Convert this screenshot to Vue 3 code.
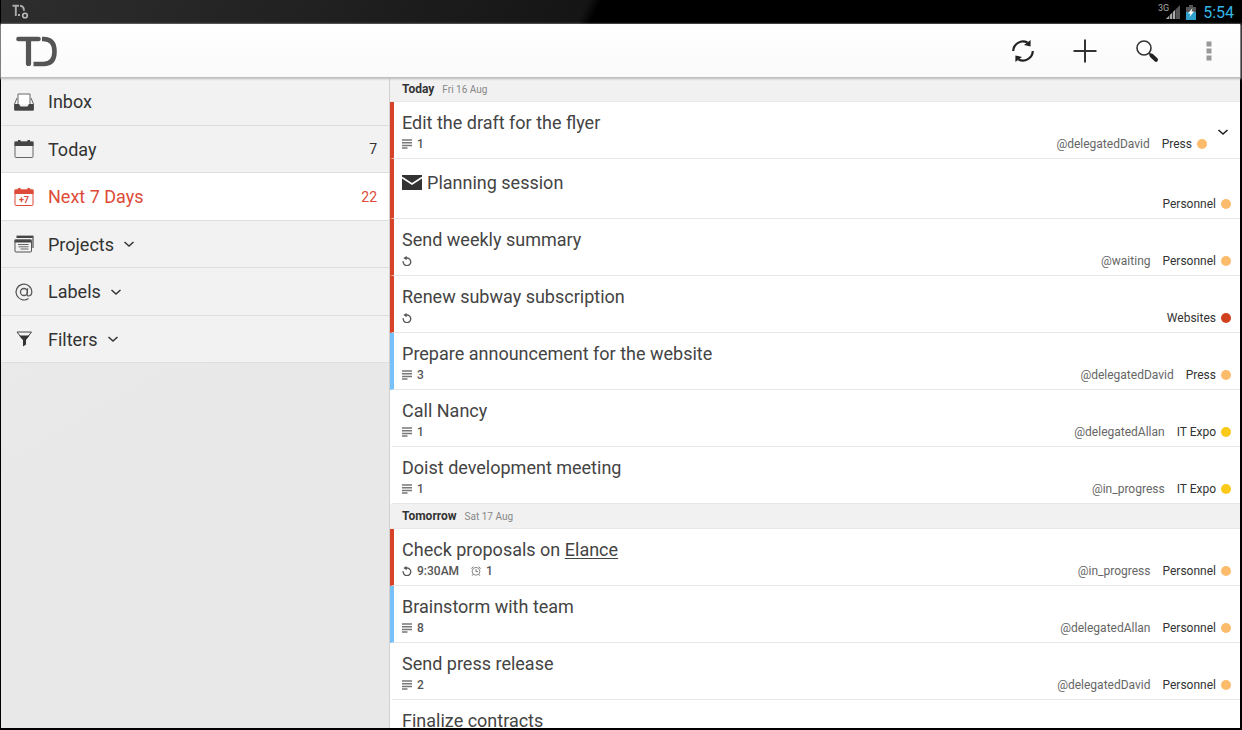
<template>
  <div class="device">
    <div class="status-bar">
      <svg class="status-app" width="18" height="16" viewBox="0 0 18 16">
        <path d="M1.500 1.800h6.500M4.800 2v10M9 1.800q4 .4 4 5M7 11h2" fill="none" stroke="#aaa" stroke-width="1.900" />
        <circle cx="14" cy="11.500" r="2.300" fill="none" stroke="#bbb" stroke-width="1.600" />
      </svg>
      <div class="status-right">
        <span class="network">3G</span>
        <svg class="signal" width="14" height="14" viewBox="0 0 14 14">
          <path d="M0 14 14 0v14z" fill="#555" />
          <path d="M0 14 10 4v10z" fill="#aaa" />
          <path d="M3.500 0v14M6.500 0v14M9.500 0v14" stroke="#000" stroke-width="0.700" />
        </svg>
        <svg class="battery" width="10" height="15" viewBox="0 0 10 15">
          <path d="M3 0h4v2h3v5H0V2h3z" fill="#555" />
          <path d="M0 7h10v8H0z" fill="#2fa0cc" />
          <path d="M6.500 3 2 8.500h2.500L3.500 12 8 6.500H5.500z" fill="#fff" />
        </svg>
        <time class="clock">5:54</time>
      </div>
    </div>

    <header class="action-bar">
      <svg class="logo" width="42" height="32" viewBox="0 0 42 32" role="img" aria-label="Todoist">
        <g fill="none" stroke="#555" stroke-linecap="round">
          <path d="M3.500 4H23.500" stroke-width="4.600" />
          <path d="M13.500 5v23.500" stroke-width="5.200" />
        </g>
        <path d="M27 4h1.500q11 0 11 12.500T28.500 29H18.500" fill="none" stroke="#555" stroke-width="4.600" />
      </svg>
      <div class="actions">
        <button type="button" aria-label="Sync">
          <svg width="24" height="24" viewBox="0 0 24 24">
            <path d="M2.200 12A9.800 9.800 0 0 1 16.500 3.600M21.800 12A9.800 9.800 0 0 1 7.500 20.400" fill="none" stroke="#222" stroke-width="2.200" />
            <path d="M19.600 1v6.600L13 6z M4.400 23v-6.600L11 18z" fill="#222" />
          </svg>
        </button>
        <button type="button" aria-label="Add task">
          <svg width="24" height="24" viewBox="0 0 24 24">
            <path d="M12 .5v23M.5 12h23" stroke="#333" stroke-width="2" />
          </svg>
        </button>
        <button type="button" aria-label="Search">
          <svg width="24" height="24" viewBox="0 0 24 24">
            <circle cx="9" cy="9" r="7" fill="none" stroke="#333" stroke-width="1.600" />
            <path d="m14 14 3 3" stroke="#333" stroke-width="2" />
            <path d="m16.500 16.500 4.500 4.300" stroke="#222" stroke-width="4" stroke-linecap="round" />
          </svg>
        </button>
        <button type="button" aria-label="More options">
          <svg width="24" height="24" viewBox="0 0 24 24">
            <path d="M9.500 2.500h5v5h-5zM9.500 9.500h5v5h-5zM9.500 16.500h5v5h-5z" fill="#999" />
          </svg>
        </button>
      </div>
    </header>

    <div class="content">
      <nav class="sidebar">
        <ul>
          <li v-for="item in menu" :key="item.name" :class="{ active: item.name === selected }">
            <button type="button" @click="selected = item.name">
              <svg v-if="item.icon === 'inbox'" class="menu-icon" viewBox="0 0 20 20">
                <path d="M4 12V2h12v10" fill="#fff" stroke="#666" />
                <path d="M3 6 .5 12v6h19v-6L17 6" fill="none" stroke="#666" />
                <path d="M.5 12H5l1.500 2.500h7L15 12h4.500v6.500H.5z" fill="#444" />
              </svg>
              <svg v-else-if="item.icon === 'calendar'" class="menu-icon" viewBox="0 0 20 20">
                <rect x="1" y="3" width="18" height="15.500" rx="1" fill="none" stroke="#666" />
                <path d="M.5 2.500h19V7H.5zM4 1h2.500v2H4zM13.500 1H16v2h-2.500z" fill="#444" />
              </svg>
              <svg v-else-if="item.icon === 'week'" class="menu-icon" viewBox="0 0 20 20">
                <rect x="1" y="3" width="18" height="15.500" rx="1" fill="none" stroke="currentColor" />
                <path d="M.5 2.500h19V7H.5zM4 1h2.500v2H4zM13.500 1H16v2h-2.500z" fill="currentColor" />
                <text x="10" y="16" text-anchor="middle" font-size="9" font-weight="700" fill="currentColor">+7</text>
              </svg>
              <svg v-else-if="item.icon === 'projects'" class="menu-icon" viewBox="0 0 20 20">
                <path d="M2.500 2.800h17" fill="none" stroke="#444" stroke-width="2.400" />
                <path d="M19 3v11" fill="none" stroke="#777" stroke-width="1.600" />
                <path d="M.5 5.500h17v3H.5z" fill="#444" />
                <rect x="1" y="6" width="16.500" height="12" rx="1" fill="none" stroke="#555" />
                <path d="M4 10.500h10.500M4.500 12.800h10M6.500 15h8" stroke="#666" />
              </svg>
              <svg v-else-if="item.icon === 'labels'" class="menu-icon" viewBox="0 0 20 20">
                <circle cx="10" cy="10" r="3.500" fill="none" stroke="#555" stroke-width="1.300" />
                <path d="M13.700 6.200 13 12q0 2 1.800 2 3-.5 3-4.300a7.900 7.900 0 1 0-3.300 6.800" fill="none" stroke="#555" stroke-width="1.200" />
              </svg>
              <svg v-else class="menu-icon" viewBox="0 0 20 20">
                <path d="M3 3h14.500l-5.500 7h-3.500z" fill="none" stroke="#444" />
                <path d="M5 6.500h10.500L12 11v4.500L9 17.500V11z" fill="#333" />
              </svg>
              <span class="menu-name">{{ item.name }}</span>
              <svg v-if="item.expandable" class="chevron" viewBox="0 0 12 12">
                <path d="m1.500 4 4.500 4 4.500-4" fill="none" stroke="#333" stroke-width="1.500" />
              </svg>
              <span v-if="item.count" class="count">{{ item.count }}</span>
            </button>
          </li>
        </ul>
      </nav>

      <main class="task-list">
        <section v-for="day in days" :key="day.name">
          <h2>{{ day.name }} <small>{{ day.date }}</small></h2>
          <ul>
            <li
              v-for="task in day.tasks"
              :key="task.title"
              :class="['task', task.priority, { mail: task.mail }]"
            >
              <div class="task-body">
                <div class="task-title">
                  <svg v-if="task.mail" class="mail-icon" viewBox="0 0 20 15">
                    <path d="M0 0h20v15H0z" fill="#333" />
                    <path d="m0 2.500 10 6.500 10-6.500" fill="none" stroke="#fff" stroke-width="1.500" />
                  </svg>
                  <span>{{ task.title }}<template v-if="task.link">&nbsp;<a href="#">{{ task.link }}</a></template></span>
                </div>
                <div class="task-meta">
                  <span v-if="task.notes" class="meta-item">
                    <svg class="meta-icon" viewBox="0 0 10 10">
                      <path d="M0 1h10M0 3.700h10M0 6.400h10M0 9h5.500" stroke="#777" stroke-width="1.500" />
                    </svg>
                    {{ task.notes }}
                  </span>
                  <span v-if="task.repeat" class="meta-item">
                    <svg class="meta-icon" viewBox="0 0 10 10">
                      <path d="M3.500 2h1.700A3.800 3.800 0 1 1 1.200 5.200" fill="none" stroke="#555" stroke-width="1.300" />
                      <path d="M4.600 0v4.200L1.400 2z" fill="#555" />
                    </svg>
                    {{ task.time }}
                  </span>
                  <span v-if="task.reminders" class="meta-item">
                    <svg class="meta-icon" viewBox="0 0 10 10">
                      <circle cx="5" cy="5.300" r="3.900" fill="none" stroke="#888" />
                      <path d="M5 3.200v2.400h2M.3 2.500 2.300.6M9.700 2.500 7.700.6M2.200 8.300 1.200 9.700M7.800 8.300l1 1.400" fill="none" stroke="#777" />
                    </svg>
                    {{ task.reminders }}
                  </span>
                  <span v-if="task.project" class="task-tags">
                    <span v-if="task.label" class="label">{{ task.label }}</span>
                    <span class="project">{{ task.project }}</span>
                    <span :class="['dot', task.color]"></span>
                  </span>
                </div>
              </div>
              <button v-if="task.menu" type="button" class="task-menu" aria-label="Task menu">
                <svg class="chevron" viewBox="0 0 12 12">
                  <path d="m1.500 4 4.500 4 4.500-4" fill="none" stroke="#222" stroke-width="1.600" />
                </svg>
              </button>
            </li>
          </ul>
        </section>
      </main>
    </div>
  </div>
</template>

<script setup>
import { ref } from 'vue'

const selected = ref('Next 7 Days')

const menu = [
  { name: 'Inbox', icon: 'inbox' },
  { name: 'Today', icon: 'calendar', count: 7 },
  { name: 'Next 7 Days', icon: 'week', count: 22 },
  { name: 'Projects', icon: 'projects', expandable: true },
  { name: 'Labels', icon: 'labels', expandable: true },
  { name: 'Filters', icon: 'filters', expandable: true }
]

const days = [
  {
    name: 'Today',
    date: 'Fri 16 Aug',
    tasks: [
      { title: 'Edit the draft for the flyer', priority: 'red', notes: 1, label: '@delegatedDavid', project: 'Press', color: 'orange', menu: true },
      { title: 'Planning session', priority: 'red', mail: true, project: 'Personnel', color: 'orange' },
      { title: 'Send weekly summary', priority: 'red', repeat: true, label: '@waiting', project: 'Personnel', color: 'orange' },
      { title: 'Renew subway subscription', priority: 'red', repeat: true, project: 'Websites', color: 'crimson' },
      { title: 'Prepare announcement for the website', priority: 'blue', notes: 3, label: '@delegatedDavid', project: 'Press', color: 'orange' },
      { title: 'Call Nancy', notes: 1, label: '@delegatedAllan', project: 'IT Expo', color: 'yellow' },
      { title: 'Doist development meeting', notes: 1, label: '@in_progress', project: 'IT Expo', color: 'yellow' }
    ]
  },
  {
    name: 'Tomorrow',
    date: 'Sat 17 Aug',
    tasks: [
      { title: 'Check proposals on', link: 'Elance', priority: 'red', repeat: true, time: '9:30AM', reminders: 1, label: '@in_progress', project: 'Personnel', color: 'orange' },
      { title: 'Brainstorm with team', priority: 'blue', notes: 8, label: '@delegatedAllan', project: 'Personnel', color: 'orange' },
      { title: 'Send press release', notes: 2, label: '@delegatedDavid', project: 'Personnel', color: 'orange' },
      { title: 'Finalize contracts' }
    ]
  }
]
</script>

<style>
body {
  margin: 0;
}
</style>

<style scoped>
.device {
  box-sizing: border-box;
  height: 100vh;
  display: flex;
  flex-direction: column;
  padding: 0 2px 2px 1px;
  background: #000;
  color: #333;
  font-family: Roboto, sans-serif;
  overflow: hidden;
}

ul {
  list-style: none;
  margin: 0;
  padding: 0;
}

button {
  border: 0;
  padding: 0;
  background: none;
  color: inherit;
  font: inherit;
  cursor: pointer;
}

svg {
  display: block;
  flex: none;
}

.status-bar {
  flex: none;
  height: 24px;
  display: flex;
  align-items: center;
  justify-content: space-between;
  padding: 0 6px 0 10px;
  background: linear-gradient(115deg, #2e2e2e 0%, #151515 47%, #000 48%);
}

.status-right {
  display: flex;
  align-items: center;
}

.network {
  align-self: flex-start;
  margin-right: -3px;
  color: #aaa;
  font-size: 9px;
  line-height: 10px;
}

.battery {
  margin: 0 7px 0 6px;
}

.clock {
  color: #33b5e5;
  font-size: 16px;
}

.action-bar {
  flex: none;
  height: 53px;
  display: flex;
  align-items: center;
  justify-content: space-between;
  padding: 0 19px 0 14px;
  background: linear-gradient(#fff, #fafafa);
  box-shadow: 0 1px 2px 1px #bbb;
  position: relative;
}

.actions {
  display: flex;
  gap: 38px;
}

.content {
  flex: 1;
  min-height: 0;
  display: flex;
}

.sidebar {
  flex: 0 0 31.4%;
  box-sizing: border-box;
  padding-top: 1px;
  background: linear-gradient(150deg, #eaeaea 30%, #e8e8e8 50%);
  border-right: 1px solid #d0d0d0;
}

.sidebar li {
  box-sizing: border-box;
  height: 47px;
  border-bottom: 1px solid #dedede;
  background: #f2f2f2;
}

.sidebar li:nth-child(odd) {
  height: 48px;
}

.sidebar li.active {
  background: #fff;
  color: #dd4b39;
}

.sidebar button {
  width: 100%;
  height: 100%;
  display: flex;
  align-items: center;
  padding: 0 12px 0 13px;
  font-size: 18px;
  text-align: left;
}

.menu-icon {
  width: 20px;
  height: 20px;
  margin-right: 14px;
}

.chevron {
  width: 12px;
  height: 12px;
}

.sidebar .chevron {
  margin-left: 9px;
}

.count {
  margin-left: auto;
  font-size: 14px;
}

.task-list {
  flex: 1;
  min-width: 0;
  background: #fff;
  overflow: hidden;
}

h2 {
  box-sizing: border-box;
  height: 25px;
  margin: 0;
  padding-left: 12px;
  border-bottom: 1px solid #e8e8e8;
  background: #f1f1f1;
  color: #333;
  font-size: 12px;
  font-weight: 700;
  line-height: 25px;
}

h2 small {
  margin-left: 5px;
  color: #888;
  font-size: 10px;
  font-weight: 400;
}

.task {
  box-sizing: border-box;
  height: 57px;
  display: flex;
  align-items: center;
  padding: 3px 9px 0 8px;
  border-left: 4px solid #fff;
  border-bottom: 1px solid #e6e6e6;
}

.task.red {
  border-left-color: #d84229;
}

.task.blue {
  border-left-color: #76c1fa;
}

.task.mail {
  height: 60px;
  padding-top: 6px;
}

.task-body {
  flex: 1;
  min-width: 0;
}

.task-title {
  display: flex;
  align-items: center;
  gap: 5px;
  color: #444;
  font-size: 18px;
  line-height: 24px;
}

.task-title a {
  color: inherit;
  text-underline-offset: 2px;
}

.mail-icon {
  width: 20px;
  height: 15px;
}

.task-meta {
  display: flex;
  align-items: center;
  gap: 12px;
  height: 18px;
  color: #555;
  font-size: 12px;
}

.meta-item {
  display: flex;
  align-items: center;
  gap: 5px;
  font-weight: 500;
}

.meta-icon {
  width: 10px;
  height: 10px;
}

.task-tags {
  margin-left: auto;
  display: flex;
  align-items: center;
}

.label {
  margin-right: 12px;
  color: #666;
}

.project {
  color: #333;
}

.dot {
  width: 10px;
  height: 10px;
  margin-left: 5px;
  border-radius: 50%;
}

.orange {
  background: #fcbc6c;
}

.crimson {
  background: #d0401c;
}

.yellow {
  background: #fbc918;
}

.task-menu {
  margin: 0 2px 0 10px;
}
</style>
